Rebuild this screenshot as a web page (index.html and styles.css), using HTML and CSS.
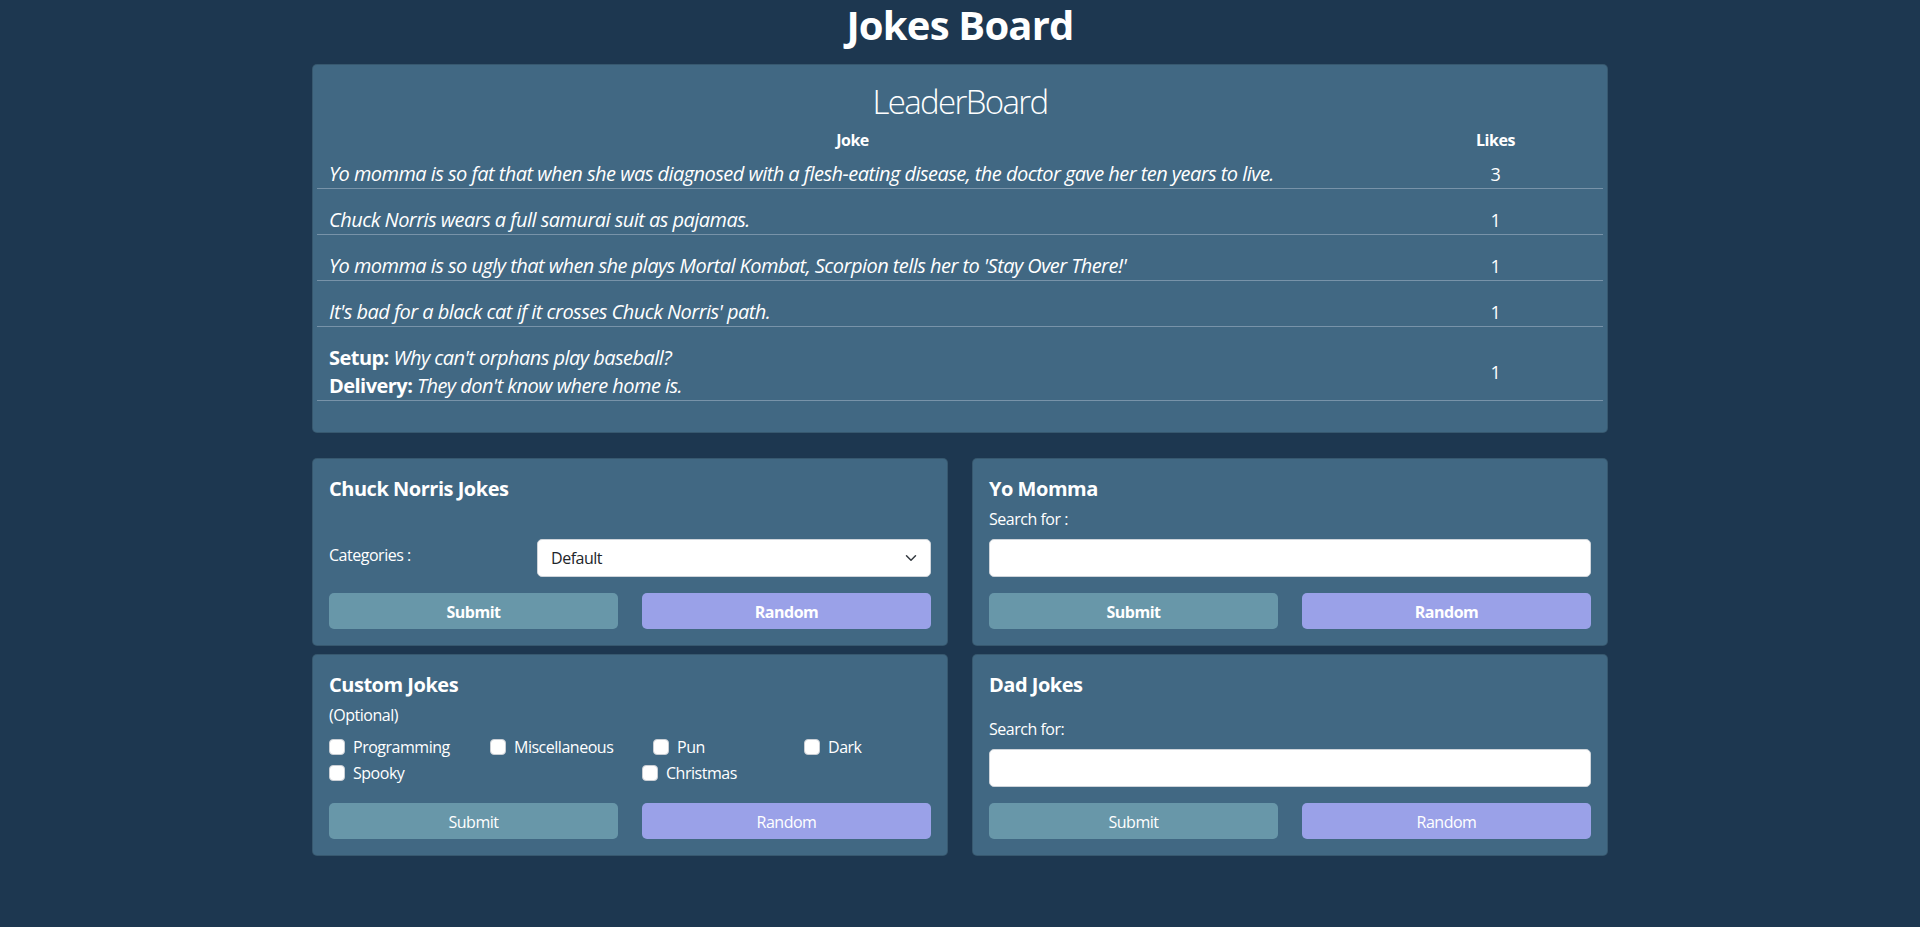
FILE: index.html
```html
<!DOCTYPE html>
<html lang="en">
<head>
<meta charset="utf-8">
<title>Jokes Board</title>
<link rel="stylesheet" href="styles.css">
</head>
<body>
<h1 class="page-title">Jokes Board</h1>
<main class="container">
  <section class="card leaderboard">
    <h2 class="lb-title">LeaderBoard</h2>
    <table class="lb-table">
      <thead>
        <tr><th class="col-joke">Joke</th><th class="col-likes">Likes</th></tr>
      </thead>
      <tbody>
        <tr class="lb-row first"><td class="joke">Yo momma is so fat that when she was diagnosed with a flesh-eating disease, the doctor gave her ten years to live.</td><td class="likes">3</td></tr>
        <tr class="lb-row"><td class="joke">Chuck Norris wears a full samurai suit as pajamas.</td><td class="likes">1</td></tr>
        <tr class="lb-row"><td class="joke">Yo momma is so ugly that when she plays Mortal Kombat, Scorpion tells her to 'Stay Over There!'</td><td class="likes">1</td></tr>
        <tr class="lb-row"><td class="joke">It's bad for a black cat if it crosses Chuck Norris' path.</td><td class="likes">1</td></tr>
        <tr class="lb-row two"><td class="joke"><div><b>Setup:</b> Why can't orphans play baseball?</div><div><b>Delivery:</b> They don't know where home is.</div></td><td class="likes">1</td></tr>
      </tbody>
    </table>
  </section>

  <div class="cards">
    <section class="card panel">
      <h5 class="panel-title">Chuck Norris Jokes</h5>
      <div class="cat-row">
        <label class="cat-label" for="cat">Categories :</label>
        <div class="select-wrap">
          <select id="cat" class="form-select"><option>Default</option></select>
          <svg class="chev" width="16" height="12" viewBox="0 0 16 16"><path d="m2 5 6 6 6-6" fill="none" stroke="#343a40" stroke-width="2" stroke-linecap="round" stroke-linejoin="round"/></svg>
        </div>
      </div>
      <div class="btn-row">
        <button class="btn submit bold">Submit</button>
        <button class="btn random bold">Random</button>
      </div>
    </section>

    <section class="card panel">
      <h5 class="panel-title">Yo Momma</h5>
      <label class="field-label" for="ym">Search for :</label>
      <input id="ym" class="form-input" type="text">
      <div class="btn-row">
        <button class="btn submit bold">Submit</button>
        <button class="btn random bold">Random</button>
      </div>
    </section>

    <section class="card panel">
      <h5 class="panel-title">Custom Jokes</h5>
      <p class="optional">(Optional)</p>
      <div class="checks row1">
        <label class="check"><input type="checkbox"><span>Programming</span></label>
        <label class="check"><input type="checkbox"><span>Miscellaneous</span></label>
        <label class="check"><input type="checkbox"><span>Pun</span></label>
        <label class="check"><input type="checkbox"><span>Dark</span></label>
      </div>
      <div class="checks row2">
        <label class="check"><input type="checkbox"><span>Spooky</span></label>
        <label class="check"><input type="checkbox"><span>Christmas</span></label>
      </div>
      <div class="btn-row">
        <button class="btn submit">Submit</button>
        <button class="btn random">Random</button>
      </div>
    </section>

    <section class="card panel">
      <h5 class="panel-title">Dad Jokes</h5>
      <label class="field-label dad" for="dj">Search for:</label>
      <input id="dj" class="form-input" type="text">
      <div class="btn-row">
        <button class="btn submit">Submit</button>
        <button class="btn random">Random</button>
      </div>
    </section>
  </div>
</main>
</body>
</html>
```
FILE: styles.css
```css
* { box-sizing: border-box; }

html, body {
  margin: 0;
  padding: 0;
}

body {
  background: #1d3750;
  color: #ffffff;
  font-family: "Open Sans", "Noto Sans", "Liberation Sans", sans-serif;
  font-size: 16px;
  line-height: 24px;
  letter-spacing: -0.03em;
}

.page-title {
  margin: 1px 0 15px;
  font-size: 40px;
  line-height: 48px;
  font-weight: 700;
  text-align: center;
  letter-spacing: -0.02em;
}

.container {
  width: 1296px;
  margin: 0 auto;
}

.card {
  background: #416883;
  border: 1px solid rgba(0, 0, 0, 0.15);
  border-radius: 5px;
}

/* Leaderboard */
.leaderboard {
  padding: 16px 4px 31px;
  margin-bottom: 25px;
}

.lb-title {
  margin: 0 0 6px;
  font-size: 33px;
  line-height: 41px;
  font-weight: 300;
  text-align: center;
  letter-spacing: -0.05em;
}

.lb-table {
  width: 100%;
  border-collapse: collapse;
}

.lb-table th {
  padding: 0 8px;
  height: 24px;
  font-size: 16px;
  line-height: 24px;
  font-weight: 700;
  text-align: center;
}

.col-likes { width: 215px; }

.lb-row td {
  padding: 17px 12px 0;
  border-bottom: 1px solid #7893a9;
  line-height: 28px;
  vertical-align: middle;
}

.lb-row.first td { padding-top: 8px; }
.lb-row.two td { padding-top: 17px; }

.joke {
  font-size: 20px;
  font-style: italic;
  letter-spacing: -0.027em;
}

.joke b {
  font-style: normal;
  font-weight: 700;
}

.likes {
  font-size: 18px;
  text-align: center;
}

/* Panels */
.cards {
  display: grid;
  grid-template-columns: 1fr 1fr;
  column-gap: 24px;
  row-gap: 8px;
}

.panel {
  padding: 18px 16px 16px;
  display: flex;
  flex-direction: column;
}

.panel-title {
  margin: 0 0 6px;
  font-size: 20px;
  line-height: 24px;
  font-weight: 700;
}

.cat-row {
  margin-top: 32px;
  display: grid;
  grid-template-columns: 184px 1fr;
  column-gap: 24px;
  align-items: start;
}

.cat-label { padding-top: 4px; }

.select-wrap {
  position: relative;
}

.form-select, .form-input {
  display: block;
  width: 100%;
  height: 38px;
  background: #ffffff;
  border: 1px solid #ced4da;
  border-radius: 5px;
  font-family: inherit;
  font-size: 16px;
  letter-spacing: -0.03em;
  color: #212529;
  padding: 6px 36px 6px 13px;
  appearance: none;
  -webkit-appearance: none;
  outline: none;
}

.form-input { padding: 6px 12px; }

.chev {
  position: absolute;
  right: 12px;
  top: 13px;
  pointer-events: none;
}

.field-label {
  display: block;
  margin-bottom: 8px;
  padding-top: 1px;
  line-height: 23px;
}

.field-label.dad { margin-top: 14px; }

.btn-row {
  margin-top: 16px;
  display: grid;
  grid-template-columns: 1fr 1fr;
  column-gap: 24px;
}

.btn {
  height: 36px;
  border: none;
  border-radius: 5px;
  color: #ffffff;
  font-family: inherit;
  font-size: 16px;
  letter-spacing: -0.03em;
  font-weight: 400;
  padding: 1px 12px 0;
}

.btn.bold { font-weight: 700; }

.submit { background: #6897a9; }
.random { background: #9aa1e8; }

.optional {
  margin: 0 0 8px;
}

.checks {
  display: grid;
  margin-bottom: 2px;
}

.checks.row1 { grid-template-columns: 161px 163px 151px 1fr; }
.checks.row2 { grid-template-columns: 313px 1fr; }

.check {
  display: flex;
  align-items: flex-start;
  height: 24px;
}

.check span {
  padding-top: 1px;
  line-height: 23px;
}

.check input {
  appearance: none;
  -webkit-appearance: none;
  margin: 4px 8px 0 0;
  width: 16px;
  height: 16px;
  background: #ffffff;
  border: 1px solid #c9ced4;
  border-radius: 4px;
  flex: none;
}
```
